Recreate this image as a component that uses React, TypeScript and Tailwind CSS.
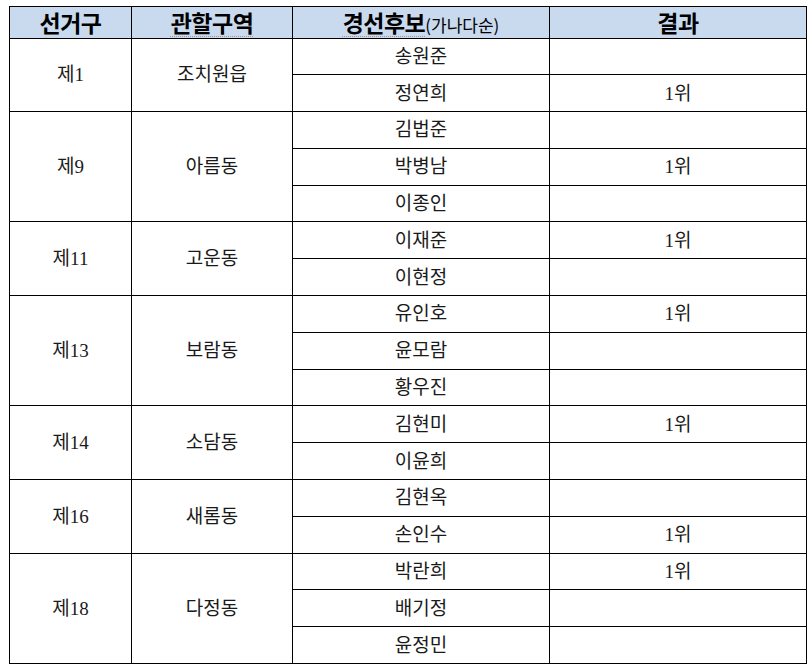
const groups = [
  { district: "제1", area: "조치원읍", rows: [["송원준", ""], ["정연희", "1위"]] },
  { district: "제9", area: "아름동", rows: [["김법준", ""], ["박병남", "1위"], ["이종인", ""]] },
  { district: "제11", area: "고운동", rows: [["이재준", "1위"], ["이현정", ""]] },
  { district: "제13", area: "보람동", rows: [["유인호", "1위"], ["윤모람", ""], ["황우진", ""]] },
  { district: "제14", area: "소담동", rows: [["김현미", "1위"], ["이윤희", ""]] },
  { district: "제16", area: "새롬동", rows: [["김현옥", ""], ["손인수", "1위"]] },
  { district: "제18", area: "다정동", rows: [["박란희", "1위"], ["배기정", ""], ["윤정민", ""]] },
];

const cell = "border border-black text-center align-middle";
const spell = "underline decoration-dotted decoration-[#a89090] decoration-1 underline-offset-[4px]";

export default function App() {
  return (
    <div className="min-h-[667px] w-[812px] bg-white pl-[9px] pt-[6px]">
      <table
        className="w-[797px] table-fixed border-collapse text-[#1a1a1a]"
        style={{ fontFamily: '"Liberation Serif", "Noto Sans CJK KR", serif' }}
      >
        <colgroup>
          <col className="w-[122px]" />
          <col className="w-[161px]" />
          <col className="w-[257px]" />
          <col className="w-[257px]" />
        </colgroup>
        <thead>
          <tr
            className="h-[31.5px] bg-[#c9d9ee] text-[23px] font-black leading-none tracking-[-0.5px] text-black"
            style={{ fontFamily: '"Noto Sans CJK KR", sans-serif' }}
          >
            <th className={cell}>선거구</th>
            <th className={cell}>
              <span className={spell}>관할구역</span>
            </th>
            <th className={cell}>
              <span className={spell}>경선후보</span>
              <span className="text-[17px] font-normal tracking-normal">(가나다순)</span>
            </th>
            <th className={cell}>결과</th>
          </tr>
        </thead>
        <tbody className="text-[19px] leading-none">
          {groups.map((g) =>
            g.rows.map(([name, result], i) => (
              <tr key={g.district + name} className="h-[36.8px]">
                {i === 0 && (
                  <>
                    <td rowSpan={g.rows.length} className={cell}>
                      {g.district}
                    </td>
                    <td rowSpan={g.rows.length} className={cell}>
                      {g.area}
                    </td>
                  </>
                )}
                <td className={cell}>{name}</td>
                <td className={cell}>{result}</td>
              </tr>
            ))
          )}
        </tbody>
      </table>
    </div>
  );
}
